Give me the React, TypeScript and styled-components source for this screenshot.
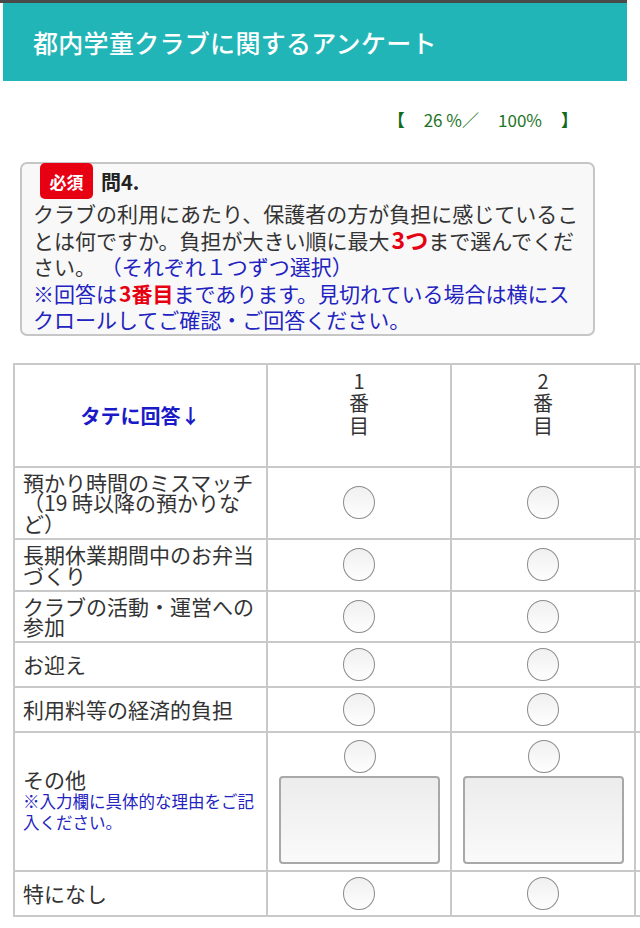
import React from 'react';
import styled, { createGlobalStyle } from 'styled-components';

const GlobalStyle = createGlobalStyle`
	body {
		margin: 0;
		background: #ffffff;
		font-family: "Noto Sans CJK JP", "Noto Sans", sans-serif;
		color: #333333;
	}
`;

const Page = styled.div`
	width: 640px;
	overflow: hidden;
`;

const HeaderBar = styled.div`
	width: 627px;
	border-top: 3px solid #4a4a4a;
`;

const Title = styled.h1`
	margin: 0 0 0 3px;
	height: 78px;
	display: flex;
	align-items: center;
	padding-left: 30px;
	background: #22b5b7;
	color: #ffffff;
	font-size: 25px;
	font-weight: 500;
	letter-spacing: 0.3px;
`;

const Progress = styled.div`
	margin-top: 27px;
	padding-right: 62px;
	display: flex;
	justify-content: flex-end;
	gap: 19px;
	font-family: "Noto Sans CJK JP", "Open Sans", sans-serif;
	font-size: 17px;
	font-weight: 400;
	line-height: 24px;
	color: #1d7425;
`;

const Bracket = styled.span`
	font-weight: 700;
	color: #126b1c;
`;

const QuestionBox = styled.div`
	margin: 30px 0 0 20px;
	width: 575px;
	box-sizing: border-box;
	border: 2px solid #c6c6c6;
	border-radius: 7px;
	background: #f8f8f8;
	padding: 0 14px 1px 11px;
`;

const QuestionHead = styled.div`
	display: flex;
	align-items: center;
	gap: 8px;
	height: 37px;
	margin-top: -1px;
`;

const Badge = styled.span`
	display: inline-flex;
	align-items: center;
	justify-content: center;
	margin-left: 7px;
	width: 53px;
	height: 36px;
	align-self: flex-start;
	background: #e60012;
	border-radius: 5px;
	color: #ffffff;
	font-size: 17px;
	font-weight: 700;
`;

const QuestionNo = styled.span`
	font-size: 20px;
	font-weight: 700;
	color: #222222;
`;

const QuestionText = styled.p`
	margin: 0;
	font-size: 21px;
	line-height: 26.5px;
	color: #333333;
`;

const Em = styled.span<{ $size?: number }>`
	color: #e60012;
	font-weight: 700;
	font-size: ${(p) => p.$size || 21}px;
	line-height: 20px;
	margin-left: 2px;
`;

const Note = styled.span`
	color: #2323c0;
`;

const TableWrap = styled.div`
	margin: 27px 0 0 13px;
	overflow: hidden;
`;

const Table = styled.table`
	border-collapse: collapse;
	table-layout: fixed;
	width: 807px;
`;

const Cell = styled.td<{ $h?: number }>`
	border: 2px solid #c9c9c9;
	height: ${(p) => p.$h || 45}px;
	box-sizing: border-box;
	padding: 0;
	vertical-align: middle;
	text-align: center;
`;

const LabelCell = styled(Cell)`
	text-align: left;
	padding: 0 4px 0 8px;
	font-size: 21px;
	line-height: 20.5px;
	color: #333333;
`;

const HeadLabel = styled(Cell)`
	font-size: 20px;
	font-weight: 700;
	color: #1a1ac8;
`;

const RankHead = styled(Cell)`
	vertical-align: top;
	padding-top: 5px;
	font-size: 20px;
	line-height: 22.5px;
	color: #333333;
`;

const SmallNote = styled.div`
	margin-top: 2px;
	font-size: 16.5px;
	line-height: 21px;
	color: #2323c0;
`;

const Radio = styled.input.attrs({ type: 'radio' })`
	appearance: none;
	-webkit-appearance: none;
	display: block;
	margin: 0 auto;
	width: 32px;
	height: 33px;
	border: 1.5px solid #8c8c8c;
	border-radius: 50%;
	background: linear-gradient(#f0f0f0, #fefefe);
	box-sizing: border-box;
`;

const OtherCell = styled(Cell)`
	vertical-align: top;
	padding: 7px 9px 6px 10px;
`;

const OtherInput = styled.textarea`
	display: block;
	width: 161px;
	height: 88px;
	margin: 3px 0 0 1px;
	box-sizing: border-box;
	border: 2px solid #a8a8a8;
	border-radius: 4px;
	background: linear-gradient(#ececec, #fafafa);
	resize: none;
`;

const rows = [
	{ label: ['預かり時間のミスマッチ', '（19 時以降の預かりな', 'ど）'], h: 72 },
	{ label: ['長期休業期間中のお弁当', 'づくり'], h: 52 },
	{ label: ['クラブの活動・運営への', '参加'], h: 51 },
	{ label: ['お迎え'], h: 45 },
	{ label: ['利用料等の経済的負担'], h: 45 },
];

const ranks = ['1', '2', '3'];

function App() {
	return (
		<Page>
			<GlobalStyle />
			<HeaderBar>
				<Title>都内学童クラブに関するアンケート</Title>
			</HeaderBar>
			<Progress>
				<Bracket>【</Bracket>
				<span>26 %／</span>
				<span>100%</span>
				<Bracket>】</Bracket>
			</Progress>
			<QuestionBox>
				<QuestionHead>
					<Badge>必須</Badge>
					<QuestionNo>問4.</QuestionNo>
				</QuestionHead>
				<QuestionText>
					クラブの利用にあたり、保護者の方が負担に感じていることは何ですか。負担が大きい順に最大<Em $size={23}>3つ</Em>まで選んでください。 <Note>（それぞれ１つずつ選択）</Note>
					<br />
					<Note>
						※回答は<Em>3番目</Em>まであります。見切れている場合は横にスクロールしてご確認・ご回答ください。
					</Note>
				</QuestionText>
			</QuestionBox>
			<TableWrap>
				<Table>
					<colgroup>
						<col style={{ width: 253 }} />
						<col style={{ width: 184 }} />
						<col style={{ width: 184 }} />
						<col style={{ width: 186 }} />
					</colgroup>
					<tbody>
						<tr>
							<HeadLabel $h={103}>タテに回答↓</HeadLabel>
							{ranks.map((r) => (
								<RankHead key={r} $h={103}>
									{r}
									<br />番<br />目
								</RankHead>
							))}
						</tr>
						{rows.map((row, i) => (
							<tr key={i}>
								<LabelCell $h={row.h}>
									{row.label.map((l, j) => (
										<div key={j}>{l}</div>
									))}
								</LabelCell>
								{ranks.map((r) => (
									<Cell key={r} $h={row.h}>
										<Radio name={`q4_${r}`} />
									</Cell>
								))}
							</tr>
						))}
						<tr>
							<LabelCell $h={139}>
								<div>その他</div>
								<SmallNote>
									※入力欄に具体的な理由をご記
									<br />
									入ください。
								</SmallNote>
							</LabelCell>
							{ranks.map((r) => (
								<OtherCell key={r} $h={139}>
									<Radio name={`q4_${r}`} />
									<OtherInput />
								</OtherCell>
							))}
						</tr>
						<tr>
							<LabelCell $h={45}>特になし</LabelCell>
							{ranks.map((r) => (
								<Cell key={r} $h={45}>
									<Radio name={`q4_${r}`} />
								</Cell>
							))}
						</tr>
					</tbody>
				</Table>
			</TableWrap>
		</Page>
	);
}

export default App;
